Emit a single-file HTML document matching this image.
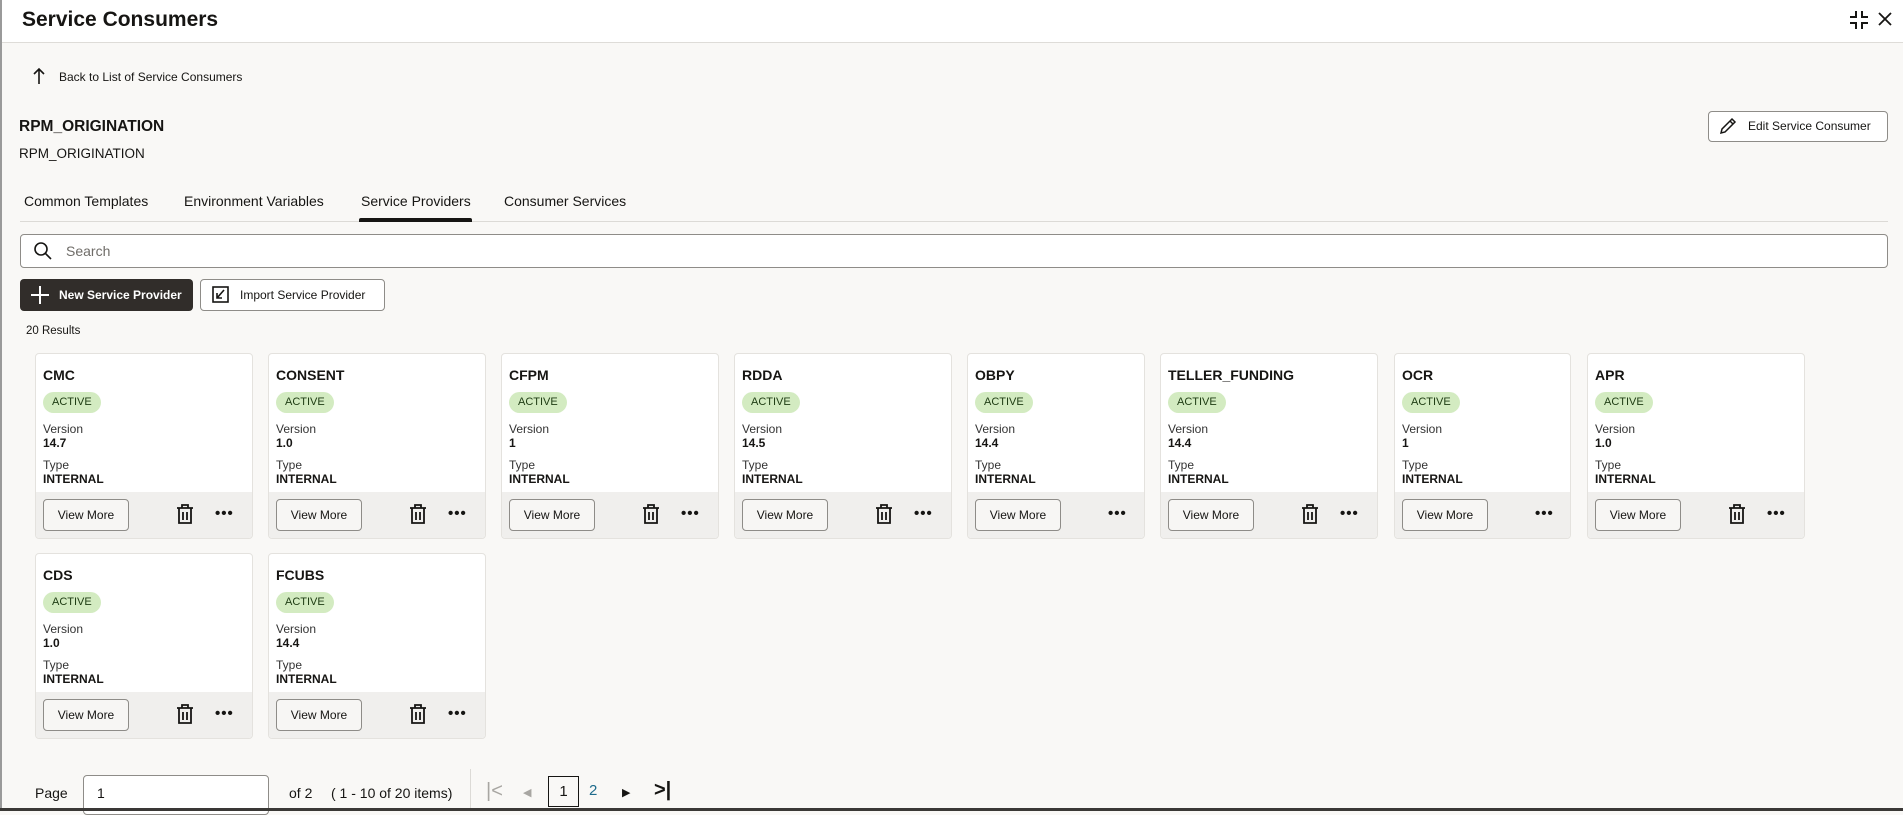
<!DOCTYPE html>
<html><head><meta charset="utf-8"><style>
*{box-sizing:border-box;margin:0;padding:0}
body{width:1903px;height:811px;overflow:hidden;background:#f9f8f6;font-family:"Liberation Sans",Arial,sans-serif;color:#161513;position:relative;border-left:2px solid #9a9a9a}
.a{position:absolute}
.hdr{left:0;top:0;width:1903px;height:43px;background:#fff;border-bottom:1px solid #dedcd8}
.card{position:absolute;background:#fff;border:1px solid #e4e2de;border-radius:4px;height:186px;overflow:hidden}
.card .t{position:absolute;left:7px;top:13px;font-size:14px;font-weight:bold}
.card .b{position:absolute;left:7px;top:38px;height:21px;padding:0 9px;background:#d3ebc1;border-radius:11px;font-size:11px;line-height:21px;color:#1d3b12}
.card .l{position:absolute;left:7px;font-size:12px;color:#333}
.card .v{position:absolute;left:7px;font-size:12px;font-weight:bold}
.card .f{position:absolute;left:0;right:0;bottom:0;height:46px;background:#f0efed}
.vm{position:absolute;left:7px;top:7px;width:86px;height:32px;border:1px solid #8e8c88;border-radius:4px;font-size:12px;text-align:center;line-height:30px;background:#f7f6f4}
.dots{position:absolute;top:13px;font-size:15px;font-weight:bold;letter-spacing:1px}
.tr{position:absolute;top:12px}
.btn{position:absolute;border-radius:4px;font-size:12px;line-height:30px}
</style></head><body>
<div class="a hdr"></div>
<div class="a" style="left:20px;top:8px;font-size:21px;font-weight:bold">Service Consumers</div>
<svg class="a" style="left:1846px;top:9px" width="22" height="22" viewBox="0 0 22 22" fill="none" stroke="#161513" stroke-width="2"><path d="M8 2v6H2M14 2v6h6M8 20v-6H2M14 20v-6h6" stroke-dasharray="0"/></svg>
<svg class="a" style="left:1876px;top:12px" width="14" height="14" viewBox="0 0 14 14" stroke="#161513" stroke-width="1.8"><path d="M1 1l12 12M13 1L1 13"/></svg>

<svg class="a" style="left:31px;top:67px" width="12" height="18" viewBox="0 0 12 18" fill="none" stroke="#161513" stroke-width="1.6"><path d="M6 17V2M1 7l5-5 5 5"/></svg>
<div class="a" style="left:57px;top:70px;font-size:12px">Back to List of Service Consumers</div>

<div class="a" style="left:17px;top:118px;font-size:15.5px;font-weight:bold">RPM_ORIGINATION</div>
<div class="a" style="left:17px;top:146px;font-size:13.5px">RPM_ORIGINATION</div>

<div class="btn" style="left:1706px;top:111px;width:180px;height:31px;border:1px solid #8e8c88;background:#fff"></div>
<svg class="a" style="left:1717px;top:117px" width="18" height="18" viewBox="0 0 18 18" fill="none" stroke="#161513" stroke-width="1.5"><path d="M2 16l1-4L13 2l3 3L6 15zM11 4l3 3"/></svg>
<div class="a" style="left:1746px;top:119px;font-size:12px">Edit Service Consumer</div>

<div class="a" style="left:22px;top:193px;font-size:14px">Common Templates</div>
<div class="a" style="left:182px;top:193px;font-size:14px">Environment Variables</div>
<div class="a" style="left:359px;top:193px;font-size:14px">Service Providers</div>
<div class="a" style="left:502px;top:193px;font-size:14px">Consumer Services</div>
<div class="a" style="left:18px;top:221px;width:1868px;height:1px;background:#dcdad6"></div>
<div class="a" style="left:357px;top:218px;width:113px;height:4px;background:#161513;border-radius:2px 2px 0 0"></div>

<div class="a" style="left:18px;top:234px;width:1868px;height:34px;border:1px solid #8e8c88;border-radius:4px;background:#fff"></div>
<svg class="a" style="left:31px;top:241px" width="20" height="20" viewBox="0 0 20 20" fill="none" stroke="#161513" stroke-width="1.6"><circle cx="8" cy="8" r="6"/><path d="M12.5 12.5L18 18"/></svg>
<div class="a" style="left:64px;top:243px;font-size:14px;color:#6f6c68">Search</div>

<div class="btn" style="left:18px;top:279px;width:173px;height:32px;background:#312d2a;color:#fff;font-weight:bold;padding-left:39px;line-height:32px">New Service Provider</div>
<svg class="a" style="left:28px;top:285px" width="20" height="20" viewBox="0 0 20 20" stroke="#fff" stroke-width="2"><path d="M10 1v18M1 10h18"/></svg>
<div class="btn" style="left:198px;top:279px;width:185px;height:32px;border:1px solid #8e8c88;background:#fff;padding-left:39px">Import Service Provider</div>
<svg class="a" style="left:210px;top:286px" width="17" height="17" viewBox="0 0 17 17" fill="none" stroke="#161513" stroke-width="1.6"><rect x="1" y="1" width="15" height="15"/><path d="M12 4l-7 8M5 7v5h5"/></svg>
<div class="a" style="left:24px;top:325px;font-size:11.5px">20 Results</div>

<div class="card" style="left:33px;top:353px;width:218px"><div class="t">CMC</div><div class="b">ACTIVE</div><div class="l" style="top:68px">Version</div><div class="v" style="top:82px">14.7</div><div class="l" style="top:104px">Type</div><div class="v" style="top:118px">INTERNAL</div><div class="f"><div class="vm">View More</div><svg class="tr" style="left:140px" width="18" height="20" viewBox="0 0 18 20" fill="none" stroke="#161513" stroke-width="1.8"><path d="M1 4h16M6 4V1h6v3M3 4v15h12V4M7 8v8M11 8v8"/></svg><div class="dots" style="left:179px">•••</div></div></div>
<div class="card" style="left:266px;top:353px;width:218px"><div class="t">CONSENT</div><div class="b">ACTIVE</div><div class="l" style="top:68px">Version</div><div class="v" style="top:82px">1.0</div><div class="l" style="top:104px">Type</div><div class="v" style="top:118px">INTERNAL</div><div class="f"><div class="vm">View More</div><svg class="tr" style="left:140px" width="18" height="20" viewBox="0 0 18 20" fill="none" stroke="#161513" stroke-width="1.8"><path d="M1 4h16M6 4V1h6v3M3 4v15h12V4M7 8v8M11 8v8"/></svg><div class="dots" style="left:179px">•••</div></div></div>
<div class="card" style="left:499px;top:353px;width:218px"><div class="t">CFPM</div><div class="b">ACTIVE</div><div class="l" style="top:68px">Version</div><div class="v" style="top:82px">1</div><div class="l" style="top:104px">Type</div><div class="v" style="top:118px">INTERNAL</div><div class="f"><div class="vm">View More</div><svg class="tr" style="left:140px" width="18" height="20" viewBox="0 0 18 20" fill="none" stroke="#161513" stroke-width="1.8"><path d="M1 4h16M6 4V1h6v3M3 4v15h12V4M7 8v8M11 8v8"/></svg><div class="dots" style="left:179px">•••</div></div></div>
<div class="card" style="left:732px;top:353px;width:218px"><div class="t">RDDA</div><div class="b">ACTIVE</div><div class="l" style="top:68px">Version</div><div class="v" style="top:82px">14.5</div><div class="l" style="top:104px">Type</div><div class="v" style="top:118px">INTERNAL</div><div class="f"><div class="vm">View More</div><svg class="tr" style="left:140px" width="18" height="20" viewBox="0 0 18 20" fill="none" stroke="#161513" stroke-width="1.8"><path d="M1 4h16M6 4V1h6v3M3 4v15h12V4M7 8v8M11 8v8"/></svg><div class="dots" style="left:179px">•••</div></div></div>
<div class="card" style="left:965px;top:353px;width:178px"><div class="t">OBPY</div><div class="b">ACTIVE</div><div class="l" style="top:68px">Version</div><div class="v" style="top:82px">14.4</div><div class="l" style="top:104px">Type</div><div class="v" style="top:118px">INTERNAL</div><div class="f"><div class="vm">View More</div><div class="dots" style="left:140px">•••</div></div></div>
<div class="card" style="left:1158px;top:353px;width:218px"><div class="t">TELLER_FUNDING</div><div class="b">ACTIVE</div><div class="l" style="top:68px">Version</div><div class="v" style="top:82px">14.4</div><div class="l" style="top:104px">Type</div><div class="v" style="top:118px">INTERNAL</div><div class="f"><div class="vm">View More</div><svg class="tr" style="left:140px" width="18" height="20" viewBox="0 0 18 20" fill="none" stroke="#161513" stroke-width="1.8"><path d="M1 4h16M6 4V1h6v3M3 4v15h12V4M7 8v8M11 8v8"/></svg><div class="dots" style="left:179px">•••</div></div></div>
<div class="card" style="left:1392px;top:353px;width:177px"><div class="t">OCR</div><div class="b">ACTIVE</div><div class="l" style="top:68px">Version</div><div class="v" style="top:82px">1</div><div class="l" style="top:104px">Type</div><div class="v" style="top:118px">INTERNAL</div><div class="f"><div class="vm">View More</div><div class="dots" style="left:140px">•••</div></div></div>
<div class="card" style="left:1585px;top:353px;width:218px"><div class="t">APR</div><div class="b">ACTIVE</div><div class="l" style="top:68px">Version</div><div class="v" style="top:82px">1.0</div><div class="l" style="top:104px">Type</div><div class="v" style="top:118px">INTERNAL</div><div class="f"><div class="vm">View More</div><svg class="tr" style="left:140px" width="18" height="20" viewBox="0 0 18 20" fill="none" stroke="#161513" stroke-width="1.8"><path d="M1 4h16M6 4V1h6v3M3 4v15h12V4M7 8v8M11 8v8"/></svg><div class="dots" style="left:179px">•••</div></div></div>
<div class="card" style="left:33px;top:553px;width:218px"><div class="t">CDS</div><div class="b">ACTIVE</div><div class="l" style="top:68px">Version</div><div class="v" style="top:82px">1.0</div><div class="l" style="top:104px">Type</div><div class="v" style="top:118px">INTERNAL</div><div class="f"><div class="vm">View More</div><svg class="tr" style="left:140px" width="18" height="20" viewBox="0 0 18 20" fill="none" stroke="#161513" stroke-width="1.8"><path d="M1 4h16M6 4V1h6v3M3 4v15h12V4M7 8v8M11 8v8"/></svg><div class="dots" style="left:179px">•••</div></div></div>
<div class="card" style="left:266px;top:553px;width:218px"><div class="t">FCUBS</div><div class="b">ACTIVE</div><div class="l" style="top:68px">Version</div><div class="v" style="top:82px">14.4</div><div class="l" style="top:104px">Type</div><div class="v" style="top:118px">INTERNAL</div><div class="f"><div class="vm">View More</div><svg class="tr" style="left:140px" width="18" height="20" viewBox="0 0 18 20" fill="none" stroke="#161513" stroke-width="1.8"><path d="M1 4h16M6 4V1h6v3M3 4v15h12V4M7 8v8M11 8v8"/></svg><div class="dots" style="left:179px">•••</div></div></div>

<div class="a" style="left:33px;top:785px;font-size:14px">Page</div>
<div class="a" style="left:81px;top:775px;width:186px;height:40px;border:1px solid #8e8c88;border-radius:4px;background:#fff;padding:9px 0 0 13px;font-size:14px">1</div>
<div class="a" style="left:287px;top:785px;font-size:14px">of 2</div>
<div class="a" style="left:329px;top:785px;font-size:14px">( 1 - 10 of 20 items)</div>
<div class="a" style="left:468px;top:769px;width:1px;height:40px;background:#dcdad6"></div>
<div class="a" style="left:484px;top:780px;font-size:20px;color:#a8a6a2">|&lt;</div>
<div class="a" style="left:521px;top:786px;font-size:11px;color:#a8a6a2">◀</div>
<div class="a" style="left:546px;top:776px;width:31px;height:31px;border:1px solid #161513;text-align:center;line-height:29px;font-size:15px">1</div>
<div class="a" style="left:587px;top:782px;font-size:15px;color:#1e6b8c">2</div>
<div class="a" style="left:620px;top:786px;font-size:11px">▶</div>
<div class="a" style="left:652px;top:779px;font-size:20px;font-weight:bold">&gt;|</div>
<div class="a" style="left:-2px;top:808px;width:1905px;height:3px;background:#3a3836"></div>
</body></html>
